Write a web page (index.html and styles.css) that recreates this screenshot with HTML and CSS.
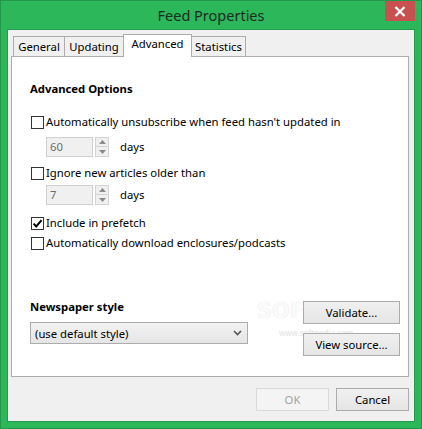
FILE: index.html
```html
<!DOCTYPE html>
<html>
<head>
<meta charset="utf-8">
<link rel="stylesheet" href="styles.css">
</head>
<body>
<div class="window">
  <div class="titlebar">
    <div class="title">Feed Properties</div>
    <div class="close"><svg width="12" height="11" viewBox="0 0 12 11"><path d="M1.5 1 L10.5 10 M10.5 1 L1.5 10" stroke="#fff" stroke-width="2.2"/></svg></div>
  </div>
  <div class="client">
    <div class="tabs">
      <div class="tab t-general">General</div>
      <div class="tab t-updating">Updating</div>
      <div class="tab t-advanced active">Advanced</div>
      <div class="tab t-stats">Statistics</div>
    </div>
    <div class="panel">
      <div class="heading h-adv">Advanced Options</div>
      <label class="check row1"><span class="box"></span><span>Automatically unsubscribe when feed hasn't updated in</span></label>
      <div class="spin sp1">
        <div class="spin-input">60</div>
        <div class="spin-btns">
          <div class="sb"><svg width="7" height="4" viewBox="0 0 7 4"><path d="M0 4 L3.5 0 L7 4Z" fill="#8a8a8a"/></svg></div>
          <div class="sb"><svg width="7" height="4" viewBox="0 0 7 4"><path d="M0 0 L3.5 4 L7 0Z" fill="#8a8a8a"/></svg></div>
        </div>
        <span class="days">days</span>
      </div>
      <label class="check row2"><span class="box"></span><span>Ignore new articles older than</span></label>
      <div class="spin sp2">
        <div class="spin-input">7</div>
        <div class="spin-btns">
          <div class="sb"><svg width="7" height="4" viewBox="0 0 7 4"><path d="M0 4 L3.5 0 L7 4Z" fill="#8a8a8a"/></svg></div>
          <div class="sb"><svg width="7" height="4" viewBox="0 0 7 4"><path d="M0 0 L3.5 4 L7 0Z" fill="#8a8a8a"/></svg></div>
        </div>
        <span class="days">days</span>
      </div>
      <label class="check row3"><span class="box"><svg width="11" height="11" viewBox="0 0 11 11"><path d="M1.6 5.6 L4.2 8.4 L9.6 2.2" fill="none" stroke="#000" stroke-width="2"/></svg></span><span>Include in prefetch</span></label>
      <label class="check row4"><span class="box"></span><span>Automatically download enclosures/podcasts</span></label>

      <div class="bottom">
        <div class="style-col">
          <div class="heading">Newspaper style</div>
          <div class="select"><span>(use default style)</span><svg width="9" height="6" viewBox="0 0 9 6"><path d="M1 1 L4.5 4.5 L8 1" fill="none" stroke="#555" stroke-width="1.6"/></svg></div>
        </div>
        <div class="btn-col">
          <div class="btn">Validate...</div>
          <div class="btn">View source...</div>
        </div>
      </div>
      <div class="watermark"><span class="wm-big">SOFTPEDIA</span><span class="wm-small">www.softpedia.com</span></div>
    </div>
    <div class="footer">
      <div class="btn ok disabled">OK</div>
      <div class="btn ok">Cancel</div>
    </div>
  </div>
</div>
</body>
</html>
```

FILE: styles.css
```css
* { box-sizing: border-box; }
html, body { margin: 0; padding: 0; }
body {
  width: 422px;
  height: 429px;
  overflow: hidden;
  font-family: "Noto Sans", "Open Sans", sans-serif;
  font-size: 11.3px;
  color: #000;
}
.window {
  width: 422px;
  height: 429px;
  background: #2bb75a;
  border: 1px solid #23984b;
}
.titlebar {
  height: 29px;
  display: grid;
  grid-template-columns: 1fr auto 1fr;
  align-items: start;
}
.title {
  grid-column: 2;
  font-size: 14.5px;
  line-height: 29px;
  color: #1e2b22;
}
.close {
  grid-column: 3;
  justify-self: end;
  width: 30px;
  height: 20px;
  margin-right: 6px;
  background: #c75050;
  display: flex;
  align-items: center;
  justify-content: center;
}
.client {
  margin: 0 7px;
  width: 406px;
  height: 391px;
  background: #f0f0f0;
  box-shadow: 0 0 0 1px #249a4c;
  padding: 4px 5px 0 3px;
  display: flex;
  flex-direction: column;
}
.tabs {
  height: 22px;
  display: flex;
  align-items: flex-end;
  padding-left: 2px;
}
.tab {
  height: 20px;
  border: 1px solid #acacac;
  border-bottom: none;
  background: #f0f0f0;
  text-align: center;
  line-height: 19px;
  white-space: nowrap;
}
.t-general { width: 52px; }
.t-updating { width: 60px; margin-left: -1px; }
.t-advanced { width: 69px; margin-left: -1px; }
.t-stats { width: 55px; margin-left: -1px; }
.tab.active {
  height: 23px;
  margin-bottom: -1px;
  background: #fff;
  position: relative;
  z-index: 1;
  line-height: 18px;
  padding-bottom: 3px;
}
.panel {
  height: 321px;
  background: #fff;
  border: 1px solid #acacac;
  padding: 0 8px 0 18px;
  display: flex;
  flex-direction: column;
  position: relative;
}
.heading {
  font-weight: bold;
  line-height: 16px;
  height: 16px;
}
.h-adv { margin-top: 24px; }
.check {
  display: flex;
  align-items: center;
  height: 16px;
  line-height: 16px;
  margin-left: 1px;
  white-space: nowrap;
}
.box {
  width: 13px;
  height: 13px;
  border: 1px solid #333;
  background: #fff;
  margin-right: 2px;
  display: flex;
  align-items: center;
  justify-content: center;
}
.row1 { margin-top: 17px; }
.row2 { margin-top: 8px; }
.row3 { margin-top: 10px; }
.row4 { margin-top: 4px; }
.spin {
  display: flex;
  align-items: center;
  margin-left: 16px;
  height: 20px;
}
.sp1 { margin-top: 7px; }
.sp2 { margin-top: 4px; }
.spin-input {
  width: 47px;
  height: 20px;
  border: 1px solid #cfcfcf;
  background: #f0f0f0;
  color: #6d6d6d;
  line-height: 18px;
  padding-left: 3px;
}
.spin-btns {
  margin-left: 2px;
  width: 14px;
  height: 20px;
  display: flex;
  flex-direction: column;
}
.sb {
  height: 10px;
  border: 1px solid #d4d4d4;
  background: #efefef;
  display: flex;
  align-items: center;
  justify-content: center;
}
.sb + .sb { border-top: none; }
.days { margin-left: 11px; line-height: 20px; }
.bottom {
  margin-top: 48px;
  display: flex;
  justify-content: space-between;
  position: relative;
  z-index: 1;
}
.style-col { display: flex; flex-direction: column; }
.select {
  margin-top: 7px;
  width: 218px;
  height: 22px;
  border: 1px solid #acacac;
  background: linear-gradient(#f2f2f2, #e5e5e5);
  display: flex;
  align-items: center;
  justify-content: space-between;
  padding: 0 5px 0 4px;
}
.btn-col {
  display: flex;
  flex-direction: column;
  gap: 9px;
  padding-top: 2px;
}
.btn {
  width: 97px;
  height: 23px;
  border: 1px solid #acacac;
  background: linear-gradient(#f0f0f0, #e5e5e5);
  text-align: center;
  line-height: 21px;
}
.footer {
  margin-top: 11px;
  display: flex;
  justify-content: flex-end;
  gap: 7px;
}
.btn.ok { width: 73px; }
.btn.disabled {
  background: #f4f4f4;
  border-color: #d9d9d9;
  color: #a3a3a3;
}
.watermark {
  position: absolute;
  left: 245px;
  top: 242px;
  width: 120px;
  pointer-events: none;
  z-index: 0;
}
.wm-big {
  display: block;
  font-family: "DejaVu Sans", sans-serif;
  font-size: 21px;
  line-height: 24px;
  font-weight: bold;
  color: #fafafa;
  text-shadow: 0 0 1px #d8d8d8;
}
.wm-small {
  display: block;
  margin-left: 22px;
  margin-top: 5px;
  font-size: 8px;
  line-height: 10px;
  color: #e2e2e2;
}
```
